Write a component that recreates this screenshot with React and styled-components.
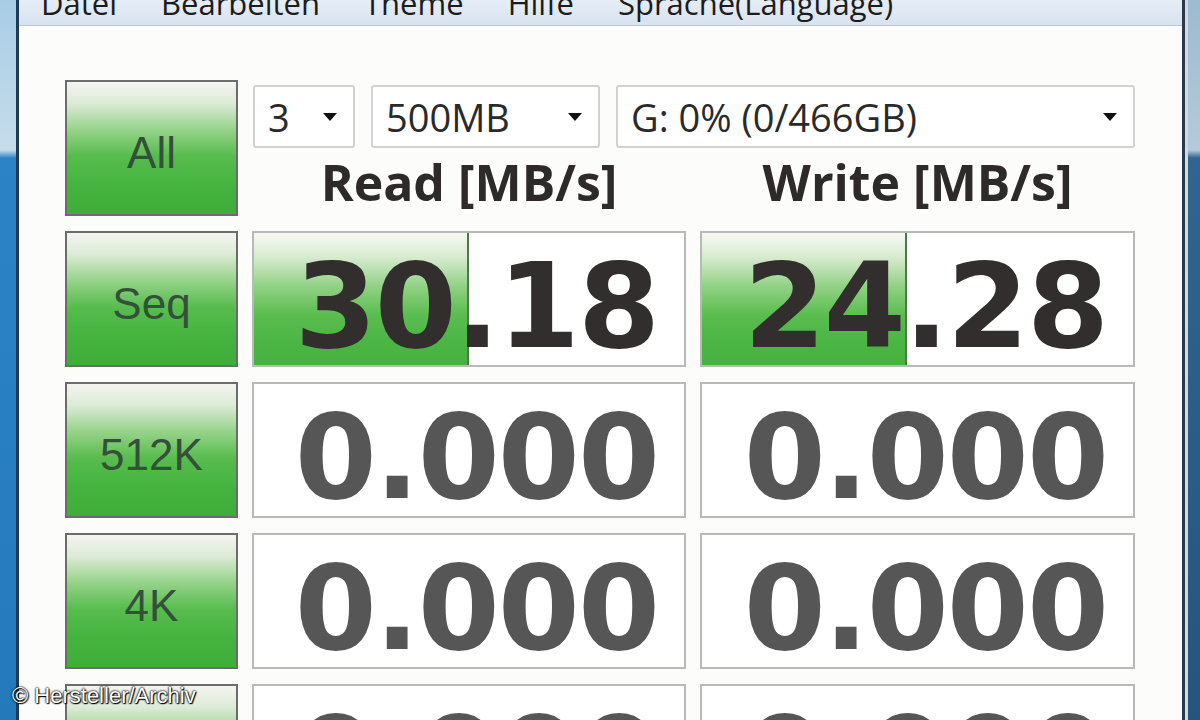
import React from "react";
import styled, { createGlobalStyle } from "styled-components";

const GlobalStyle = createGlobalStyle`
  html, body {
    margin: 0;
    padding: 0;
    overflow: hidden;
    background: #2a6a9c;
  }
  #root {
    height: 720px;
  }
`;

const menuItems = ["Datei", "Bearbeiten", "Theme", "Hilfe", "Sprache(Language)"];

const selects = [
  { label: "3", width: "102px" },
  { label: "500MB", width: "229px" },
  { label: "G: 0% (0/466GB)", width: "auto" }
];

const rows = [
  { name: "Seq", read: { value: "30.18", fill: 50 }, write: { value: "24.28", fill: 47.6 } },
  { name: "512K", read: { value: "0.000", fill: 0 }, write: { value: "0.000", fill: 0 } },
  { name: "4K", read: { value: "0.000", fill: 0 }, write: { value: "0.000", fill: 0 } },
  { name: "4K", read: { value: "0.000", fill: 0 }, write: { value: "0.000", fill: 0 } }
];

const Page = styled.div`
  position: relative;
  display: flex;
  height: 720px;
  overflow: hidden;
`;

const Edge = styled.div`
  flex: none;
  width: ${({ side }) => (side === "left" ? "16px" : "12px")};
  border-left: ${({ side }) => (side === "right" ? "3px solid #cfdbe5" : "none")};
  background: ${({ side }) =>
    side === "left"
      ? "linear-gradient(to bottom, #a9cde6 0, #c6dcea 150px, #2c84c6 158px, #2479bb 100%)"
      : "linear-gradient(to bottom, #9cbad0 0, #b4cad9 150px, #2f6590 158px, #24557e 100%)"};
`;

const Window = styled.div`
  flex: 1;
  display: flex;
  flex-direction: column;
  border-left: 3px solid #1f3a55;
  border-right: 3px solid #2a3a48;
  background: #fcfcfb;
`;

const MenuBar = styled.div`
  height: 25px;
  flex: none;
  display: flex;
  gap: 44px;
  padding-left: 22px;
  overflow: hidden;
  background: linear-gradient(to bottom, #e6edf6, #d8e3f0);
  border-bottom: 1px solid #bcc6d2;
`;

const MenuItem = styled.span`
  margin-top: -12px;
  font-family: "Open Sans", "DejaVu Sans", sans-serif;
  font-size: 31px;
  line-height: 31px;
  color: #1c1c1c;
  white-space: nowrap;
`;

const Body = styled.div`
  display: grid;
  grid-template-columns: 173px 434px 435px;
  grid-auto-rows: 136px;
  column-gap: 14px;
  row-gap: 15px;
  padding: 54px 0 0 46px;
`;

const TestButton = styled.div`
  box-sizing: border-box;
  display: flex;
  align-items: center;
  justify-content: center;
  padding-top: 10px;
  border: 2px solid #6c6c6c;
  background: linear-gradient(
    to bottom,
    #f4f4f0 0%,
    #dcebd6 16%,
    #96d38a 36%,
    #58bc4e 56%,
    #43b33d 80%,
    #3fae39 100%
  );
  font-family: "Liberation Sans", "DejaVu Sans", sans-serif;
  font-size: 44px;
  color: #34503a;
`;

const Controls = styled.div`
  grid-column: 2 / span 2;
  display: grid;
  grid-template-rows: 63px 1fr;
  padding-top: 5px;
`;

const Selects = styled.div`
  display: flex;
  gap: 16px;
  margin-left: 1px;
`;

const Select = styled.div`
  box-sizing: border-box;
  flex: ${({ width }) => (width === "auto" ? "1" : "none")};
  width: ${({ width }) => width};
  display: flex;
  align-items: center;
  justify-content: space-between;
  padding: 0 16px 0 13px;
  border: 2px solid #d2d2d2;
  border-radius: 3px;
  background: #fff;
  font-family: "Open Sans", "DejaVu Sans", sans-serif;
  font-size: 38px;
  color: #2a2a2a;
`;

const Arrow = styled.span`
  width: 0;
  height: 0;
  border-left: 7px solid transparent;
  border-right: 7px solid transparent;
  border-top: 8px solid #111;
`;

const Headers = styled.div`
  display: grid;
  grid-template-columns: 434px 435px;
  column-gap: 14px;
`;

const Header = styled.div`
  display: flex;
  align-items: center;
  justify-content: center;
  padding-bottom: 4px;
  font-family: "Open Sans", "DejaVu Sans", sans-serif;
  font-weight: 700;
  font-size: 50px;
  color: #2e2a2a;
  white-space: nowrap;
`;

const ValueBox = styled.div`
  box-sizing: border-box;
  position: relative;
  display: flex;
  align-items: center;
  justify-content: flex-end;
  padding: 14px 26px 0 0;
  border: 2px solid #b9b9b9;
  background: #fff;
  overflow: hidden;
`;

const Fill = styled.div`
  position: absolute;
  left: 0;
  top: 0;
  bottom: 0;
  box-sizing: border-box;
  border-right: 2px solid #4c7a46;
  background: linear-gradient(
    to bottom,
    #f6f8f3 0%,
    #d8ebd0 18%,
    #92d285 40%,
    #5abd4f 62%,
    #4ab543 84%,
    #47b240 100%
  );
`;

const Value = styled.span`
  position: relative;
  font-family: "DejaVu Sans", "Liberation Sans", sans-serif;
  font-weight: 700;
  font-size: 118px;
  line-height: 1;
  letter-spacing: -2px;
  color: ${({ zero }) => (zero ? "#565656" : "#332e2e")};
`;

const Credit = styled.div`
  position: absolute;
  left: 12px;
  bottom: 11px;
  font-family: "Liberation Sans", Arial, sans-serif;
  font-size: 22px;
  color: #fff;
  text-shadow: 0 0 2px #000, 0 0 2px #000, 1px 1px 1px #000;
`;

const Cell = ({ data }) => (
  <ValueBox>
    {data.fill > 0 && <Fill style={{ width: `${data.fill}%` }} />}
    <Value zero={data.value === "0.000"}>{data.value}</Value>
  </ValueBox>
);

const App = () => (
  <Page>
    <GlobalStyle />
    <Edge side="left" />
    <Window>
      <MenuBar>
        {menuItems.map((item) => (
          <MenuItem key={item}>{item}</MenuItem>
        ))}
      </MenuBar>
      <Body>
        <TestButton>All</TestButton>
        <Controls>
          <Selects>
            {selects.map((s) => (
              <Select key={s.label} width={s.width}>
                {s.label}
                <Arrow />
              </Select>
            ))}
          </Selects>
          <Headers>
            <Header>Read [MB/s]</Header>
            <Header>Write [MB/s]</Header>
          </Headers>
        </Controls>
        {rows.map((row, i) => (
          <React.Fragment key={i}>
            <TestButton>{row.name}</TestButton>
            <Cell data={row.read} />
            <Cell data={row.write} />
          </React.Fragment>
        ))}
      </Body>
    </Window>
    <Edge side="right" />
    <Credit>© Hersteller/Archiv</Credit>
  </Page>
);

export default App;
